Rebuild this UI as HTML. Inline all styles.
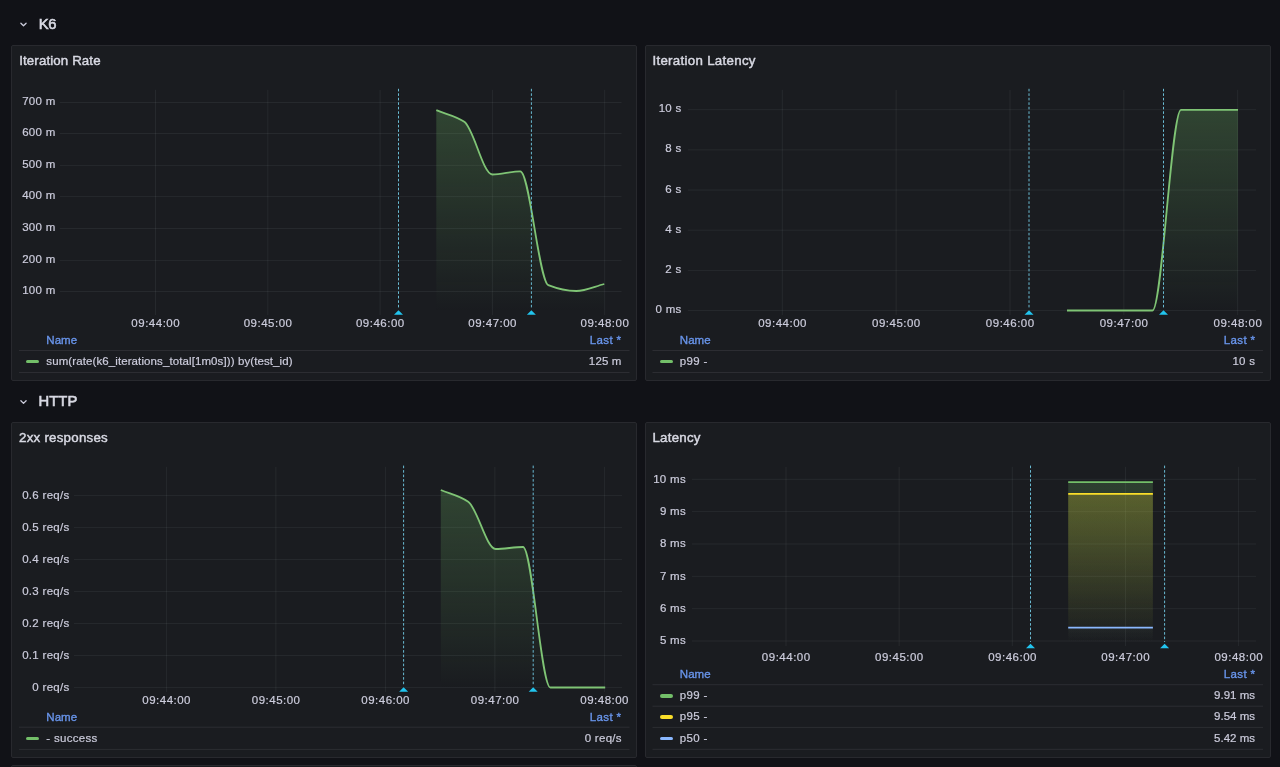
<!DOCTYPE html>
<html><head><meta charset="utf-8"><style>
html,body{margin:0;padding:0;width:1280px;height:767px;overflow:hidden;background:#111217;font-family:"Liberation Sans", sans-serif;}
</style></head><body>
<div style="position:absolute;left:0;top:0;width:1280px;height:767px;will-change:transform"><div style="position:absolute;top:17.27px;font-size:14.80px;line-height:14.80px;color:#d8d9e3;font-weight:400;white-space:nowrap;letter-spacing:-0.30px;-webkit-text-stroke:0.60px #d8d9e3;left:38.70px;">K6</div>
<div style="position:absolute;top:394.37px;font-size:14.80px;line-height:14.80px;color:#d8d9e3;font-weight:400;white-space:nowrap;letter-spacing:0.10px;-webkit-text-stroke:0.60px #d8d9e3;left:38.40px;">HTTP</div>
<div style="position:absolute;left:11.00px;top:45.00px;width:626.00px;height:336.00px;background:#1a1c20;border:1px solid #28292e;border-radius:2px;box-sizing:border-box;"></div>
<div style="position:absolute;top:53.54px;font-size:13.30px;line-height:13.30px;color:#d8d9e3;font-weight:400;white-space:nowrap;letter-spacing:0.12px;-webkit-text-stroke:0.45px #d8d9e3;left:19.20px;">Iteration Rate</div>
<div style="position:absolute;top:96.07px;font-size:11.50px;line-height:11.50px;color:#ccccdc;font-weight:400;white-space:nowrap;letter-spacing:0.30px;-webkit-text-stroke:0.20px #ccccdc;right:1224.40px;text-align:right;">700 m</div>
<div style="position:absolute;top:127.07px;font-size:11.50px;line-height:11.50px;color:#ccccdc;font-weight:400;white-space:nowrap;letter-spacing:0.30px;-webkit-text-stroke:0.20px #ccccdc;right:1224.40px;text-align:right;">600 m</div>
<div style="position:absolute;top:158.97px;font-size:11.50px;line-height:11.50px;color:#ccccdc;font-weight:400;white-space:nowrap;letter-spacing:0.30px;-webkit-text-stroke:0.20px #ccccdc;right:1224.40px;text-align:right;">500 m</div>
<div style="position:absolute;top:190.17px;font-size:11.50px;line-height:11.50px;color:#ccccdc;font-weight:400;white-space:nowrap;letter-spacing:0.30px;-webkit-text-stroke:0.20px #ccccdc;right:1224.40px;text-align:right;">400 m</div>
<div style="position:absolute;top:222.07px;font-size:11.50px;line-height:11.50px;color:#ccccdc;font-weight:400;white-space:nowrap;letter-spacing:0.30px;-webkit-text-stroke:0.20px #ccccdc;right:1224.40px;text-align:right;">300 m</div>
<div style="position:absolute;top:253.97px;font-size:11.50px;line-height:11.50px;color:#ccccdc;font-weight:400;white-space:nowrap;letter-spacing:0.30px;-webkit-text-stroke:0.20px #ccccdc;right:1224.40px;text-align:right;">200 m</div>
<div style="position:absolute;top:285.07px;font-size:11.50px;line-height:11.50px;color:#ccccdc;font-weight:400;white-space:nowrap;letter-spacing:0.30px;-webkit-text-stroke:0.20px #ccccdc;right:1224.40px;text-align:right;">100 m</div>
<div style="position:absolute;top:318.27px;font-size:11.50px;line-height:11.50px;color:#ccccdc;font-weight:400;white-space:nowrap;letter-spacing:0.50px;-webkit-text-stroke:0.20px #ccccdc;left:55.75px;width:200px;text-align:center;">09:44:00</div>
<div style="position:absolute;top:318.27px;font-size:11.50px;line-height:11.50px;color:#ccccdc;font-weight:400;white-space:nowrap;letter-spacing:0.50px;-webkit-text-stroke:0.20px #ccccdc;left:168.05px;width:200px;text-align:center;">09:45:00</div>
<div style="position:absolute;top:318.27px;font-size:11.50px;line-height:11.50px;color:#ccccdc;font-weight:400;white-space:nowrap;letter-spacing:0.50px;-webkit-text-stroke:0.20px #ccccdc;left:280.35px;width:200px;text-align:center;">09:46:00</div>
<div style="position:absolute;top:318.27px;font-size:11.50px;line-height:11.50px;color:#ccccdc;font-weight:400;white-space:nowrap;letter-spacing:0.50px;-webkit-text-stroke:0.20px #ccccdc;left:392.65px;width:200px;text-align:center;">09:47:00</div>
<div style="position:absolute;top:318.27px;font-size:11.50px;line-height:11.50px;color:#ccccdc;font-weight:400;white-space:nowrap;letter-spacing:0.50px;-webkit-text-stroke:0.20px #ccccdc;left:504.95px;width:200px;text-align:center;">09:48:00</div>
<div style="position:absolute;top:334.87px;font-size:11.50px;line-height:11.50px;color:#6894ea;font-weight:400;white-space:nowrap;letter-spacing:0.05px;-webkit-text-stroke:0.35px #6894ea;left:46.30px;">Name</div>
<div style="position:absolute;top:334.87px;font-size:11.50px;line-height:11.50px;color:#6894ea;font-weight:400;white-space:nowrap;letter-spacing:0.35px;-webkit-text-stroke:0.35px #6894ea;right:658.65px;text-align:right;">Last *</div>
<div style="position:absolute;left:26.00px;top:359.80px;width:13.00px;height:3.60px;background:#73bf69;border-radius:2px;"></div>
<div style="position:absolute;top:355.77px;font-size:11.50px;line-height:11.50px;color:#ccccdc;font-weight:400;white-space:nowrap;letter-spacing:0.10px;-webkit-text-stroke:0.20px #ccccdc;left:46.30px;">sum(rate(k6_iterations_total[1m0s])) by(test_id)</div>
<div style="position:absolute;top:355.77px;font-size:11.50px;line-height:11.50px;color:#ccccdc;font-weight:400;white-space:nowrap;letter-spacing:0.15px;-webkit-text-stroke:0.20px #ccccdc;right:658.45px;text-align:right;">125 m</div>
<div style="position:absolute;left:645.00px;top:45.00px;width:626.00px;height:336.00px;background:#1a1c20;border:1px solid #28292e;border-radius:2px;box-sizing:border-box;"></div>
<div style="position:absolute;top:53.54px;font-size:13.30px;line-height:13.30px;color:#d8d9e3;font-weight:400;white-space:nowrap;letter-spacing:0.30px;-webkit-text-stroke:0.45px #d8d9e3;left:652.40px;">Iteration Latency</div>
<div style="position:absolute;top:103.27px;font-size:11.50px;line-height:11.50px;color:#ccccdc;font-weight:400;white-space:nowrap;letter-spacing:0.30px;-webkit-text-stroke:0.20px #ccccdc;right:598.40px;text-align:right;">10 s</div>
<div style="position:absolute;top:143.44px;font-size:11.50px;line-height:11.50px;color:#ccccdc;font-weight:400;white-space:nowrap;letter-spacing:0.30px;-webkit-text-stroke:0.20px #ccccdc;right:598.40px;text-align:right;">8 s</div>
<div style="position:absolute;top:183.61px;font-size:11.50px;line-height:11.50px;color:#ccccdc;font-weight:400;white-space:nowrap;letter-spacing:0.30px;-webkit-text-stroke:0.20px #ccccdc;right:598.40px;text-align:right;">6 s</div>
<div style="position:absolute;top:223.78px;font-size:11.50px;line-height:11.50px;color:#ccccdc;font-weight:400;white-space:nowrap;letter-spacing:0.30px;-webkit-text-stroke:0.20px #ccccdc;right:598.40px;text-align:right;">4 s</div>
<div style="position:absolute;top:263.95px;font-size:11.50px;line-height:11.50px;color:#ccccdc;font-weight:400;white-space:nowrap;letter-spacing:0.30px;-webkit-text-stroke:0.20px #ccccdc;right:598.40px;text-align:right;">2 s</div>
<div style="position:absolute;top:304.12px;font-size:11.50px;line-height:11.50px;color:#ccccdc;font-weight:400;white-space:nowrap;letter-spacing:0.30px;-webkit-text-stroke:0.20px #ccccdc;right:598.40px;text-align:right;">0 ms</div>
<div style="position:absolute;top:318.27px;font-size:11.50px;line-height:11.50px;color:#ccccdc;font-weight:400;white-space:nowrap;letter-spacing:0.50px;-webkit-text-stroke:0.20px #ccccdc;left:682.55px;width:200px;text-align:center;">09:44:00</div>
<div style="position:absolute;top:318.27px;font-size:11.50px;line-height:11.50px;color:#ccccdc;font-weight:400;white-space:nowrap;letter-spacing:0.50px;-webkit-text-stroke:0.20px #ccccdc;left:796.40px;width:200px;text-align:center;">09:45:00</div>
<div style="position:absolute;top:318.27px;font-size:11.50px;line-height:11.50px;color:#ccccdc;font-weight:400;white-space:nowrap;letter-spacing:0.50px;-webkit-text-stroke:0.20px #ccccdc;left:910.25px;width:200px;text-align:center;">09:46:00</div>
<div style="position:absolute;top:318.27px;font-size:11.50px;line-height:11.50px;color:#ccccdc;font-weight:400;white-space:nowrap;letter-spacing:0.50px;-webkit-text-stroke:0.20px #ccccdc;left:1024.10px;width:200px;text-align:center;">09:47:00</div>
<div style="position:absolute;top:318.27px;font-size:11.50px;line-height:11.50px;color:#ccccdc;font-weight:400;white-space:nowrap;letter-spacing:0.50px;-webkit-text-stroke:0.20px #ccccdc;left:1137.95px;width:200px;text-align:center;">09:48:00</div>
<div style="position:absolute;top:334.87px;font-size:11.50px;line-height:11.50px;color:#6894ea;font-weight:400;white-space:nowrap;letter-spacing:0.05px;-webkit-text-stroke:0.35px #6894ea;left:679.80px;">Name</div>
<div style="position:absolute;top:334.87px;font-size:11.50px;line-height:11.50px;color:#6894ea;font-weight:400;white-space:nowrap;letter-spacing:0.35px;-webkit-text-stroke:0.35px #6894ea;right:24.65px;text-align:right;">Last *</div>
<div style="position:absolute;left:660.00px;top:359.80px;width:13.00px;height:3.60px;background:#73bf69;border-radius:2px;"></div>
<div style="position:absolute;top:355.77px;font-size:11.50px;line-height:11.50px;color:#ccccdc;font-weight:400;white-space:nowrap;letter-spacing:0.30px;-webkit-text-stroke:0.20px #ccccdc;left:679.80px;">p99 -</div>
<div style="position:absolute;top:355.77px;font-size:11.50px;line-height:11.50px;color:#ccccdc;font-weight:400;white-space:nowrap;letter-spacing:0.30px;-webkit-text-stroke:0.20px #ccccdc;right:24.70px;text-align:right;">10 s</div>
<div style="position:absolute;left:11.00px;top:422.00px;width:626.00px;height:336.00px;background:#1a1c20;border:1px solid #28292e;border-radius:2px;box-sizing:border-box;"></div>
<div style="position:absolute;top:430.64px;font-size:13.30px;line-height:13.30px;color:#d8d9e3;font-weight:400;white-space:nowrap;letter-spacing:0.25px;-webkit-text-stroke:0.45px #d8d9e3;left:19.00px;">2xx responses</div>
<div style="position:absolute;top:489.67px;font-size:11.50px;line-height:11.50px;color:#ccccdc;font-weight:400;white-space:nowrap;letter-spacing:0.30px;-webkit-text-stroke:0.20px #ccccdc;right:1210.40px;text-align:right;">0.6 req/s</div>
<div style="position:absolute;top:521.70px;font-size:11.50px;line-height:11.50px;color:#ccccdc;font-weight:400;white-space:nowrap;letter-spacing:0.30px;-webkit-text-stroke:0.20px #ccccdc;right:1210.40px;text-align:right;">0.5 req/s</div>
<div style="position:absolute;top:553.73px;font-size:11.50px;line-height:11.50px;color:#ccccdc;font-weight:400;white-space:nowrap;letter-spacing:0.30px;-webkit-text-stroke:0.20px #ccccdc;right:1210.40px;text-align:right;">0.4 req/s</div>
<div style="position:absolute;top:585.76px;font-size:11.50px;line-height:11.50px;color:#ccccdc;font-weight:400;white-space:nowrap;letter-spacing:0.30px;-webkit-text-stroke:0.20px #ccccdc;right:1210.40px;text-align:right;">0.3 req/s</div>
<div style="position:absolute;top:617.79px;font-size:11.50px;line-height:11.50px;color:#ccccdc;font-weight:400;white-space:nowrap;letter-spacing:0.30px;-webkit-text-stroke:0.20px #ccccdc;right:1210.40px;text-align:right;">0.2 req/s</div>
<div style="position:absolute;top:649.82px;font-size:11.50px;line-height:11.50px;color:#ccccdc;font-weight:400;white-space:nowrap;letter-spacing:0.30px;-webkit-text-stroke:0.20px #ccccdc;right:1210.40px;text-align:right;">0.1 req/s</div>
<div style="position:absolute;top:681.85px;font-size:11.50px;line-height:11.50px;color:#ccccdc;font-weight:400;white-space:nowrap;letter-spacing:0.30px;-webkit-text-stroke:0.20px #ccccdc;right:1210.40px;text-align:right;">0 req/s</div>
<div style="position:absolute;top:695.27px;font-size:11.50px;line-height:11.50px;color:#ccccdc;font-weight:400;white-space:nowrap;letter-spacing:0.50px;-webkit-text-stroke:0.20px #ccccdc;left:66.65px;width:200px;text-align:center;">09:44:00</div>
<div style="position:absolute;top:695.27px;font-size:11.50px;line-height:11.50px;color:#ccccdc;font-weight:400;white-space:nowrap;letter-spacing:0.50px;-webkit-text-stroke:0.20px #ccccdc;left:176.15px;width:200px;text-align:center;">09:45:00</div>
<div style="position:absolute;top:695.27px;font-size:11.50px;line-height:11.50px;color:#ccccdc;font-weight:400;white-space:nowrap;letter-spacing:0.50px;-webkit-text-stroke:0.20px #ccccdc;left:285.65px;width:200px;text-align:center;">09:46:00</div>
<div style="position:absolute;top:695.27px;font-size:11.50px;line-height:11.50px;color:#ccccdc;font-weight:400;white-space:nowrap;letter-spacing:0.50px;-webkit-text-stroke:0.20px #ccccdc;left:395.15px;width:200px;text-align:center;">09:47:00</div>
<div style="position:absolute;top:695.27px;font-size:11.50px;line-height:11.50px;color:#ccccdc;font-weight:400;white-space:nowrap;letter-spacing:0.50px;-webkit-text-stroke:0.20px #ccccdc;left:504.65px;width:200px;text-align:center;">09:48:00</div>
<div style="position:absolute;top:712.07px;font-size:11.50px;line-height:11.50px;color:#6894ea;font-weight:400;white-space:nowrap;letter-spacing:0.05px;-webkit-text-stroke:0.35px #6894ea;left:46.30px;">Name</div>
<div style="position:absolute;top:712.07px;font-size:11.50px;line-height:11.50px;color:#6894ea;font-weight:400;white-space:nowrap;letter-spacing:0.35px;-webkit-text-stroke:0.35px #6894ea;right:658.65px;text-align:right;">Last *</div>
<div style="position:absolute;left:26.00px;top:736.80px;width:13.00px;height:3.60px;background:#73bf69;border-radius:2px;"></div>
<div style="position:absolute;top:732.77px;font-size:11.50px;line-height:11.50px;color:#ccccdc;font-weight:400;white-space:nowrap;letter-spacing:0.30px;-webkit-text-stroke:0.20px #ccccdc;left:46.30px;">- success</div>
<div style="position:absolute;top:732.77px;font-size:11.50px;line-height:11.50px;color:#ccccdc;font-weight:400;white-space:nowrap;letter-spacing:0.30px;-webkit-text-stroke:0.20px #ccccdc;right:658.10px;text-align:right;">0 req/s</div>
<div style="position:absolute;left:645.00px;top:422.00px;width:626.00px;height:336.00px;background:#1a1c20;border:1px solid #28292e;border-radius:2px;box-sizing:border-box;"></div>
<div style="position:absolute;top:430.64px;font-size:13.30px;line-height:13.30px;color:#d8d9e3;font-weight:400;white-space:nowrap;letter-spacing:0.25px;-webkit-text-stroke:0.45px #d8d9e3;left:652.40px;">Latency</div>
<div style="position:absolute;top:473.77px;font-size:11.50px;line-height:11.50px;color:#ccccdc;font-weight:400;white-space:nowrap;letter-spacing:0.30px;-webkit-text-stroke:0.20px #ccccdc;right:594.00px;text-align:right;">10 ms</div>
<div style="position:absolute;top:506.11px;font-size:11.50px;line-height:11.50px;color:#ccccdc;font-weight:400;white-space:nowrap;letter-spacing:0.30px;-webkit-text-stroke:0.20px #ccccdc;right:594.00px;text-align:right;">9 ms</div>
<div style="position:absolute;top:538.45px;font-size:11.50px;line-height:11.50px;color:#ccccdc;font-weight:400;white-space:nowrap;letter-spacing:0.30px;-webkit-text-stroke:0.20px #ccccdc;right:594.00px;text-align:right;">8 ms</div>
<div style="position:absolute;top:570.79px;font-size:11.50px;line-height:11.50px;color:#ccccdc;font-weight:400;white-space:nowrap;letter-spacing:0.30px;-webkit-text-stroke:0.20px #ccccdc;right:594.00px;text-align:right;">7 ms</div>
<div style="position:absolute;top:603.13px;font-size:11.50px;line-height:11.50px;color:#ccccdc;font-weight:400;white-space:nowrap;letter-spacing:0.30px;-webkit-text-stroke:0.20px #ccccdc;right:594.00px;text-align:right;">6 ms</div>
<div style="position:absolute;top:635.47px;font-size:11.50px;line-height:11.50px;color:#ccccdc;font-weight:400;white-space:nowrap;letter-spacing:0.30px;-webkit-text-stroke:0.20px #ccccdc;right:594.00px;text-align:right;">5 ms</div>
<div style="position:absolute;top:652.07px;font-size:11.50px;line-height:11.50px;color:#ccccdc;font-weight:400;white-space:nowrap;letter-spacing:0.50px;-webkit-text-stroke:0.20px #ccccdc;left:686.25px;width:200px;text-align:center;">09:44:00</div>
<div style="position:absolute;top:652.07px;font-size:11.50px;line-height:11.50px;color:#ccccdc;font-weight:400;white-space:nowrap;letter-spacing:0.50px;-webkit-text-stroke:0.20px #ccccdc;left:799.40px;width:200px;text-align:center;">09:45:00</div>
<div style="position:absolute;top:652.07px;font-size:11.50px;line-height:11.50px;color:#ccccdc;font-weight:400;white-space:nowrap;letter-spacing:0.50px;-webkit-text-stroke:0.20px #ccccdc;left:912.55px;width:200px;text-align:center;">09:46:00</div>
<div style="position:absolute;top:652.07px;font-size:11.50px;line-height:11.50px;color:#ccccdc;font-weight:400;white-space:nowrap;letter-spacing:0.50px;-webkit-text-stroke:0.20px #ccccdc;left:1025.70px;width:200px;text-align:center;">09:47:00</div>
<div style="position:absolute;top:652.07px;font-size:11.50px;line-height:11.50px;color:#ccccdc;font-weight:400;white-space:nowrap;letter-spacing:0.50px;-webkit-text-stroke:0.20px #ccccdc;left:1138.85px;width:200px;text-align:center;">09:48:00</div>
<div style="position:absolute;top:669.37px;font-size:11.50px;line-height:11.50px;color:#6894ea;font-weight:400;white-space:nowrap;letter-spacing:0.05px;-webkit-text-stroke:0.35px #6894ea;left:679.80px;">Name</div>
<div style="position:absolute;top:669.37px;font-size:11.50px;line-height:11.50px;color:#6894ea;font-weight:400;white-space:nowrap;letter-spacing:0.35px;-webkit-text-stroke:0.35px #6894ea;right:24.65px;text-align:right;">Last *</div>
<div style="position:absolute;left:660.00px;top:694.00px;width:12.50px;height:3.60px;background:#73bf69;border-radius:2px;"></div>
<div style="position:absolute;top:690.07px;font-size:11.50px;line-height:11.50px;color:#ccccdc;font-weight:400;white-space:nowrap;letter-spacing:0.30px;-webkit-text-stroke:0.20px #ccccdc;left:679.80px;">p99 -</div>
<div style="position:absolute;top:690.07px;font-size:11.50px;line-height:11.50px;color:#ccccdc;font-weight:400;white-space:nowrap;-webkit-text-stroke:0.20px #ccccdc;right:25.00px;text-align:right;">9.91 ms</div>
<div style="position:absolute;left:660.00px;top:715.20px;width:12.50px;height:3.60px;background:#fade2a;border-radius:2px;"></div>
<div style="position:absolute;top:711.27px;font-size:11.50px;line-height:11.50px;color:#ccccdc;font-weight:400;white-space:nowrap;letter-spacing:0.30px;-webkit-text-stroke:0.20px #ccccdc;left:679.80px;">p95 -</div>
<div style="position:absolute;top:711.27px;font-size:11.50px;line-height:11.50px;color:#ccccdc;font-weight:400;white-space:nowrap;-webkit-text-stroke:0.20px #ccccdc;right:25.00px;text-align:right;">9.54 ms</div>
<div style="position:absolute;left:660.00px;top:736.70px;width:12.50px;height:3.60px;background:#8ab8ff;border-radius:2px;"></div>
<div style="position:absolute;top:732.77px;font-size:11.50px;line-height:11.50px;color:#ccccdc;font-weight:400;white-space:nowrap;letter-spacing:0.30px;-webkit-text-stroke:0.20px #ccccdc;left:679.80px;">p50 -</div>
<div style="position:absolute;top:732.77px;font-size:11.50px;line-height:11.50px;color:#ccccdc;font-weight:400;white-space:nowrap;-webkit-text-stroke:0.20px #ccccdc;right:25.00px;text-align:right;">5.42 ms</div>
<div style="position:absolute;left:11.00px;top:765.00px;width:626.00px;height:10.00px;background:#1a1c20;border:1px solid #28292e;border-radius:2px;box-sizing:border-box;"></div></div>
<svg width="1280" height="767" style="position:absolute;left:0;top:0;pointer-events:none"><defs><linearGradient id="g1" gradientUnits="userSpaceOnUse" x1="0" y1="110.20" x2="0" y2="312.00"><stop offset="0" stop-color="#73bf69" stop-opacity="0.250"/><stop offset="1" stop-color="#73bf69" stop-opacity="0.000"/></linearGradient><linearGradient id="g2" gradientUnits="userSpaceOnUse" x1="0" y1="109.80" x2="0" y2="312.00"><stop offset="0" stop-color="#73bf69" stop-opacity="0.250"/><stop offset="1" stop-color="#73bf69" stop-opacity="0.000"/></linearGradient><linearGradient id="g3" gradientUnits="userSpaceOnUse" x1="0" y1="490.00" x2="0" y2="689.00"><stop offset="0" stop-color="#73bf69" stop-opacity="0.250"/><stop offset="1" stop-color="#73bf69" stop-opacity="0.000"/></linearGradient><linearGradient id="g4" gradientUnits="userSpaceOnUse" x1="0" y1="482.10" x2="0" y2="642.00"><stop offset="0" stop-color="#73bf69" stop-opacity="0.220"/><stop offset="1" stop-color="#73bf69" stop-opacity="0.000"/></linearGradient><linearGradient id="g5" gradientUnits="userSpaceOnUse" x1="0" y1="493.90" x2="0" y2="642.00"><stop offset="0" stop-color="#fade2a" stop-opacity="0.220"/><stop offset="1" stop-color="#fade2a" stop-opacity="0.000"/></linearGradient><linearGradient id="g6" gradientUnits="userSpaceOnUse" x1="0" y1="627.60" x2="0" y2="642.00"><stop offset="0" stop-color="#8ab8ff" stop-opacity="0.030"/><stop offset="1" stop-color="#8ab8ff" stop-opacity="0.000"/></linearGradient></defs><path d="M20.9,23.2 L23.5,25.8 L26.1,23.2" fill="none" stroke="#ccccdc" stroke-width="1.3" stroke-linecap="round" stroke-linejoin="round"/>
<path d="M20.9,400.8 L23.5,403.4 L26.1,400.8" fill="none" stroke="#ccccdc" stroke-width="1.3" stroke-linecap="round" stroke-linejoin="round"/>
<line x1="59.80" y1="102.50" x2="621.50" y2="102.50" stroke="rgba(240,250,255,0.06)" stroke-width="1"/>
<line x1="59.80" y1="133.50" x2="621.50" y2="133.50" stroke="rgba(240,250,255,0.06)" stroke-width="1"/>
<line x1="59.80" y1="165.40" x2="621.50" y2="165.40" stroke="rgba(240,250,255,0.06)" stroke-width="1"/>
<line x1="59.80" y1="196.60" x2="621.50" y2="196.60" stroke="rgba(240,250,255,0.06)" stroke-width="1"/>
<line x1="59.80" y1="228.50" x2="621.50" y2="228.50" stroke="rgba(240,250,255,0.06)" stroke-width="1"/>
<line x1="59.80" y1="260.40" x2="621.50" y2="260.40" stroke="rgba(240,250,255,0.06)" stroke-width="1"/>
<line x1="59.80" y1="291.50" x2="621.50" y2="291.50" stroke="rgba(240,250,255,0.06)" stroke-width="1"/>
<line x1="155.50" y1="89.80" x2="155.50" y2="315.00" stroke="rgba(240,250,255,0.06)" stroke-width="1"/>
<line x1="267.80" y1="89.80" x2="267.80" y2="315.00" stroke="rgba(240,250,255,0.06)" stroke-width="1"/>
<line x1="380.10" y1="89.80" x2="380.10" y2="315.00" stroke="rgba(240,250,255,0.06)" stroke-width="1"/>
<line x1="492.40" y1="89.80" x2="492.40" y2="315.00" stroke="rgba(240,250,255,0.06)" stroke-width="1"/>
<line x1="604.70" y1="89.80" x2="604.70" y2="315.00" stroke="rgba(240,250,255,0.06)" stroke-width="1"/>
<path d="M436.30,110.20 C445.63,114.07 454.97,115.46 464.30,121.80 C473.63,128.14 482.97,174.50 492.30,174.50 C501.63,174.50 510.97,171.30 520.30,171.30 C529.63,171.30 538.97,281.52 548.30,285.20 C557.63,288.88 566.97,291.00 576.30,291.00 C585.63,291.00 594.97,286.33 604.30,284.00 L604.30,312.00 L436.30,312.00 Z" fill="url(#g1)"/>
<path d="M436.30,110.20 C445.63,114.07 454.97,115.46 464.30,121.80 C473.63,128.14 482.97,174.50 492.30,174.50 C501.63,174.50 510.97,171.30 520.30,171.30 C529.63,171.30 538.97,281.52 548.30,285.20 C557.63,288.88 566.97,291.00 576.30,291.00 C585.63,291.00 594.97,286.33 604.30,284.00" fill="none" stroke="#7fc475" stroke-width="1.8" stroke-linejoin="round" stroke-linecap="butt"/>
<line x1="398.50" y1="88.80" x2="398.50" y2="308.50" stroke="#6abcd4" stroke-width="1" stroke-dasharray="2.6,1.9"/>
<path d="M394.00,314.80 L398.50,310.30 L403.00,314.80 Z" fill="#22c4ee"/>
<line x1="531.40" y1="88.80" x2="531.40" y2="308.50" stroke="#6abcd4" stroke-width="1" stroke-dasharray="2.6,1.9"/>
<path d="M526.90,314.80 L531.40,310.30 L535.90,314.80 Z" fill="#22c4ee"/>
<line x1="19.00" y1="350.50" x2="629.50" y2="350.50" stroke="#2c2d32" stroke-width="1"/>
<line x1="19.00" y1="372.50" x2="629.50" y2="372.50" stroke="#2c2d32" stroke-width="1"/>
<line x1="687.80" y1="109.70" x2="1256.00" y2="109.70" stroke="rgba(240,250,255,0.06)" stroke-width="1"/>
<line x1="687.80" y1="149.87" x2="1256.00" y2="149.87" stroke="rgba(240,250,255,0.06)" stroke-width="1"/>
<line x1="687.80" y1="190.04" x2="1256.00" y2="190.04" stroke="rgba(240,250,255,0.06)" stroke-width="1"/>
<line x1="687.80" y1="230.21" x2="1256.00" y2="230.21" stroke="rgba(240,250,255,0.06)" stroke-width="1"/>
<line x1="687.80" y1="270.38" x2="1256.00" y2="270.38" stroke="rgba(240,250,255,0.06)" stroke-width="1"/>
<line x1="687.80" y1="310.55" x2="1256.00" y2="310.55" stroke="rgba(240,250,255,0.06)" stroke-width="1"/>
<line x1="782.30" y1="89.80" x2="782.30" y2="315.00" stroke="rgba(240,250,255,0.06)" stroke-width="1"/>
<line x1="896.15" y1="89.80" x2="896.15" y2="315.00" stroke="rgba(240,250,255,0.06)" stroke-width="1"/>
<line x1="1010.00" y1="89.80" x2="1010.00" y2="315.00" stroke="rgba(240,250,255,0.06)" stroke-width="1"/>
<line x1="1123.85" y1="89.80" x2="1123.85" y2="315.00" stroke="rgba(240,250,255,0.06)" stroke-width="1"/>
<line x1="1237.70" y1="89.80" x2="1237.70" y2="315.00" stroke="rgba(240,250,255,0.06)" stroke-width="1"/>
<path d="M1067.00,310.50 C1076.50,310.50 1086.00,310.50 1095.50,310.50 C1105.00,310.50 1114.50,310.50 1124.00,310.50 C1133.50,310.50 1143.00,310.50 1152.50,310.50 C1162.00,310.50 1171.50,109.80 1181.00,109.80 C1190.50,109.80 1200.00,109.80 1209.50,109.80 C1219.00,109.80 1228.50,109.80 1238.00,109.80 L1238.00,312.00 L1067.00,312.00 Z" fill="url(#g2)"/>
<path d="M1067.00,310.50 C1076.50,310.50 1086.00,310.50 1095.50,310.50 C1105.00,310.50 1114.50,310.50 1124.00,310.50 C1133.50,310.50 1143.00,310.50 1152.50,310.50 C1162.00,310.50 1171.50,109.80 1181.00,109.80 C1190.50,109.80 1200.00,109.80 1209.50,109.80 C1219.00,109.80 1228.50,109.80 1238.00,109.80" fill="none" stroke="#7fc475" stroke-width="1.8" stroke-linejoin="round" stroke-linecap="butt"/>
<line x1="1029.00" y1="88.80" x2="1029.00" y2="308.50" stroke="#6abcd4" stroke-width="1" stroke-dasharray="2.6,1.9"/>
<path d="M1024.50,314.80 L1029.00,310.30 L1033.50,314.80 Z" fill="#22c4ee"/>
<line x1="1163.50" y1="88.80" x2="1163.50" y2="308.50" stroke="#6abcd4" stroke-width="1" stroke-dasharray="2.6,1.9"/>
<path d="M1159.00,314.80 L1163.50,310.30 L1168.00,314.80 Z" fill="#22c4ee"/>
<line x1="652.50" y1="350.50" x2="1263.00" y2="350.50" stroke="#2c2d32" stroke-width="1"/>
<line x1="652.50" y1="372.50" x2="1263.00" y2="372.50" stroke="#2c2d32" stroke-width="1"/>
<line x1="74.00" y1="495.40" x2="622.00" y2="495.40" stroke="rgba(240,250,255,0.06)" stroke-width="1"/>
<line x1="74.00" y1="527.43" x2="622.00" y2="527.43" stroke="rgba(240,250,255,0.06)" stroke-width="1"/>
<line x1="74.00" y1="559.46" x2="622.00" y2="559.46" stroke="rgba(240,250,255,0.06)" stroke-width="1"/>
<line x1="74.00" y1="591.49" x2="622.00" y2="591.49" stroke="rgba(240,250,255,0.06)" stroke-width="1"/>
<line x1="74.00" y1="623.52" x2="622.00" y2="623.52" stroke="rgba(240,250,255,0.06)" stroke-width="1"/>
<line x1="74.00" y1="655.55" x2="622.00" y2="655.55" stroke="rgba(240,250,255,0.06)" stroke-width="1"/>
<line x1="74.00" y1="687.58" x2="622.00" y2="687.58" stroke="rgba(240,250,255,0.06)" stroke-width="1"/>
<line x1="166.40" y1="466.80" x2="166.40" y2="692.00" stroke="rgba(240,250,255,0.06)" stroke-width="1"/>
<line x1="275.90" y1="466.80" x2="275.90" y2="692.00" stroke="rgba(240,250,255,0.06)" stroke-width="1"/>
<line x1="385.40" y1="466.80" x2="385.40" y2="692.00" stroke="rgba(240,250,255,0.06)" stroke-width="1"/>
<line x1="494.90" y1="466.80" x2="494.90" y2="692.00" stroke="rgba(240,250,255,0.06)" stroke-width="1"/>
<line x1="604.40" y1="466.80" x2="604.40" y2="692.00" stroke="rgba(240,250,255,0.06)" stroke-width="1"/>
<path d="M440.80,490.00 C449.93,493.90 459.07,495.45 468.20,501.70 C477.33,507.95 486.47,549.00 495.60,549.00 C504.73,549.00 513.87,547.00 523.00,547.00 C532.13,547.00 541.27,687.50 550.40,687.50 C559.53,687.50 568.67,687.50 577.80,687.50 C586.93,687.50 596.07,687.50 605.20,687.50 L605.20,689.00 L440.80,689.00 Z" fill="url(#g3)"/>
<path d="M440.80,490.00 C449.93,493.90 459.07,495.45 468.20,501.70 C477.33,507.95 486.47,549.00 495.60,549.00 C504.73,549.00 513.87,547.00 523.00,547.00 C532.13,547.00 541.27,687.50 550.40,687.50 C559.53,687.50 568.67,687.50 577.80,687.50 C586.93,687.50 596.07,687.50 605.20,687.50" fill="none" stroke="#7fc475" stroke-width="1.8" stroke-linejoin="round" stroke-linecap="butt"/>
<line x1="403.60" y1="465.60" x2="403.60" y2="685.50" stroke="#6abcd4" stroke-width="1" stroke-dasharray="2.6,1.9"/>
<path d="M399.10,691.80 L403.60,687.30 L408.10,691.80 Z" fill="#22c4ee"/>
<line x1="533.20" y1="465.60" x2="533.20" y2="685.50" stroke="#6abcd4" stroke-width="1" stroke-dasharray="2.6,1.9"/>
<path d="M528.70,691.80 L533.20,687.30 L537.70,691.80 Z" fill="#22c4ee"/>
<line x1="19.00" y1="727.20" x2="629.50" y2="727.20" stroke="#2c2d32" stroke-width="1"/>
<line x1="19.00" y1="749.40" x2="629.50" y2="749.40" stroke="#2c2d32" stroke-width="1"/>
<line x1="691.90" y1="479.30" x2="1256.00" y2="479.30" stroke="rgba(240,250,255,0.06)" stroke-width="1"/>
<line x1="691.90" y1="511.64" x2="1256.00" y2="511.64" stroke="rgba(240,250,255,0.06)" stroke-width="1"/>
<line x1="691.90" y1="543.98" x2="1256.00" y2="543.98" stroke="rgba(240,250,255,0.06)" stroke-width="1"/>
<line x1="691.90" y1="576.32" x2="1256.00" y2="576.32" stroke="rgba(240,250,255,0.06)" stroke-width="1"/>
<line x1="691.90" y1="608.66" x2="1256.00" y2="608.66" stroke="rgba(240,250,255,0.06)" stroke-width="1"/>
<line x1="691.90" y1="641.00" x2="1256.00" y2="641.00" stroke="rgba(240,250,255,0.06)" stroke-width="1"/>
<line x1="786.00" y1="466.80" x2="786.00" y2="646.00" stroke="rgba(240,250,255,0.06)" stroke-width="1"/>
<line x1="899.15" y1="466.80" x2="899.15" y2="646.00" stroke="rgba(240,250,255,0.06)" stroke-width="1"/>
<line x1="1012.30" y1="466.80" x2="1012.30" y2="646.00" stroke="rgba(240,250,255,0.06)" stroke-width="1"/>
<line x1="1125.45" y1="466.80" x2="1125.45" y2="646.00" stroke="rgba(240,250,255,0.06)" stroke-width="1"/>
<line x1="1238.60" y1="466.80" x2="1238.60" y2="646.00" stroke="rgba(240,250,255,0.06)" stroke-width="1"/>
<path d="M1068.20,482.10 L1152.90,482.10 L1152.90,642.00 L1068.20,642.00 Z" fill="url(#g4)"/>
<path d="M1068.20,493.90 L1152.90,493.90 L1152.90,642.00 L1068.20,642.00 Z" fill="url(#g5)"/>
<path d="M1068.20,627.60 L1152.90,627.60 L1152.90,642.00 L1068.20,642.00 Z" fill="url(#g6)"/>
<line x1="1068.20" y1="482.10" x2="1152.90" y2="482.10" stroke="#73bf69" stroke-width="1.7"/>
<line x1="1068.20" y1="493.90" x2="1152.90" y2="493.90" stroke="#fade2a" stroke-width="1.7"/>
<line x1="1068.20" y1="627.60" x2="1152.90" y2="627.60" stroke="#8ab8ff" stroke-width="1.7"/>
<line x1="1030.50" y1="465.60" x2="1030.50" y2="642.00" stroke="#6abcd4" stroke-width="1" stroke-dasharray="2.6,1.9"/>
<path d="M1026.00,648.30 L1030.50,643.80 L1035.00,648.30 Z" fill="#22c4ee"/>
<line x1="1164.60" y1="465.60" x2="1164.60" y2="642.00" stroke="#6abcd4" stroke-width="1" stroke-dasharray="2.6,1.9"/>
<path d="M1160.10,648.30 L1164.60,643.80 L1169.10,648.30 Z" fill="#22c4ee"/>
<line x1="652.50" y1="684.70" x2="1263.00" y2="684.70" stroke="#2c2d32" stroke-width="1"/>
<line x1="652.50" y1="706.20" x2="1263.00" y2="706.20" stroke="#2c2d32" stroke-width="1"/>
<line x1="652.50" y1="727.40" x2="1263.00" y2="727.40" stroke="#2c2d32" stroke-width="1"/>
<line x1="652.50" y1="749.30" x2="1263.00" y2="749.30" stroke="#2c2d32" stroke-width="1"/></svg>
</body></html>
